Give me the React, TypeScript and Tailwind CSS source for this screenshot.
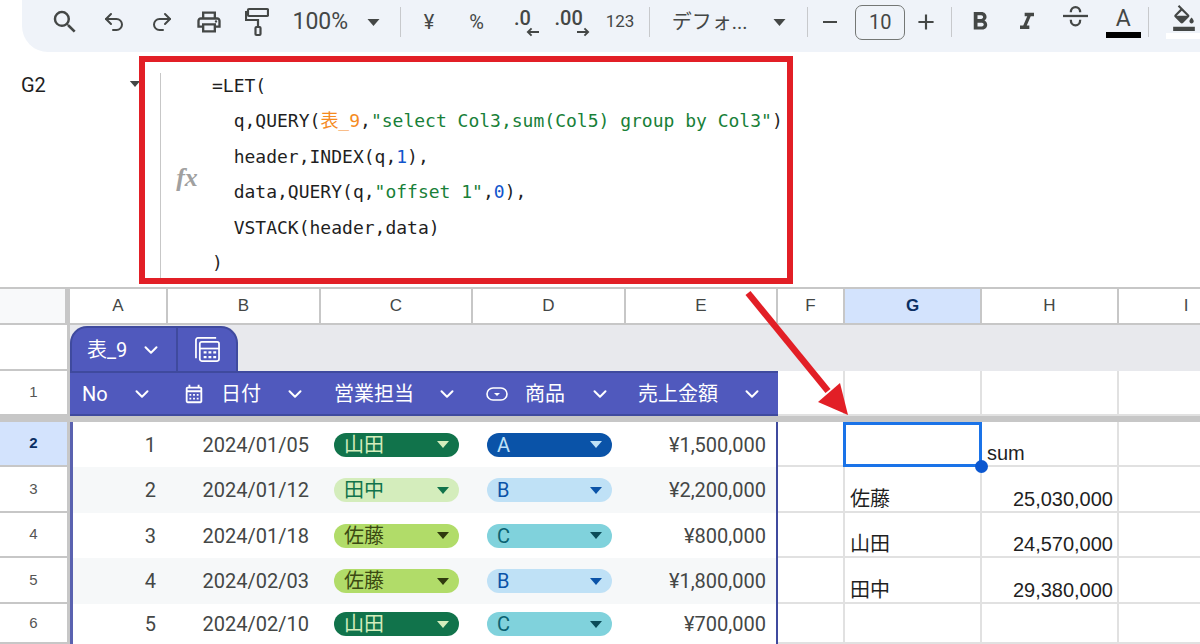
import React from 'react';
import { ChevronDown, Undo2, Redo2 } from 'lucide-react';
import {
  MdSearch,
  MdOutlinePrint,
  MdFormatBold,
  MdFormatItalic,
  MdFormatColorFill,
  MdAdd,
  MdRemove,
  MdOutlineCalendarMonth,
} from 'react-icons/md';

const sans = "font-['Roboto','Noto_Sans_CJK_JP',sans-serif]";
const arial = "font-['Liberation_Sans','Noto_Sans_CJK_JP',sans-serif]";
const mono = "font-['DejaVu_Sans_Mono','Noto_Sans_CJK_JP',monospace]";

const Caret = ({ className }: { className: string }) => (
  <svg viewBox="0 0 12 7" className={className} fill="currentColor">
    <path d="M0 0h12L6 7z" />
  </svg>
);

const Divider = () => <div className="w-px h-[30px] bg-[#c7c9cc]" />;

const Tool = ({ children }: { children: React.ReactNode }) => (
  <div className="w-[47.5px] h-[36px] flex items-center justify-center shrink-0">{children}</div>
);

const Toolbar = () => (
  <div className={`h-[52px] ml-[22px] pl-[19px] pb-[8px] flex items-center bg-[#eff3f9] rounded-bl-[26px] text-[#444746] ${sans}`}>
    <Tool><MdSearch size={30} /></Tool>
    <div className="w-[2px]" />
    <Tool><Undo2 size={24} strokeWidth={2} /></Tool>
    <Tool><Redo2 size={24} strokeWidth={2} /></Tool>
    <Tool><MdOutlinePrint size={28} /></Tool>
    <Tool>
      <svg viewBox="0 0 24 30" className="w-[24px] h-[30px]" fill="none" stroke="currentColor" strokeWidth="2.2">
        <rect x="3" y="2" width="20" height="7" rx="1" />
        <path d="M3 5H1v8h12v7" />
        <rect x="10.5" y="20" width="5" height="8" rx="1" />
      </svg>
    </Tool>
    <span className="ml-[12px] w-[56px] text-[23px]">100%</span>
    <Caret className="ml-[19px] w-[13px] h-[7px]" />
    <div className="ml-[20px]"><Divider /></div>
    <div className="ml-[4px] flex">
      <Tool><span className="text-[20px]">¥</span></Tool>
      <Tool><span className="text-[20px]">%</span></Tool>
      <Tool>
        <div className="relative w-[34px] h-[30px]">
          <span className="absolute left-[7px] top-[-4px] text-[20px] font-medium">.0</span>
          <svg viewBox="0 0 14 10" className="absolute left-[19px] top-[20px] w-[13px] h-[10px]" fill="none" stroke="currentColor" strokeWidth="2">
            <path d="M14 5H2M6 1 2 5l4 4" />
          </svg>
        </div>
      </Tool>
      <Tool>
        <div className="relative w-[40px] h-[30px]">
          <span className="absolute left-[3px] top-[-4px] text-[20px] font-medium">.00</span>
          <svg viewBox="0 0 14 10" className="absolute left-[25px] top-[20px] w-[13px] h-[10px]" fill="none" stroke="currentColor" strokeWidth="2">
            <path d="M0 5h12M8 1l4 4-4 4" />
          </svg>
        </div>
      </Tool>
      <Tool><span className="text-[17px] pl-[2px]">123</span></Tool>
    </div>
    <div className="ml-[6px]"><Divider /></div>
    <span className="ml-[22px] w-[80px] text-[20px] whitespace-nowrap">デフォ...</span>
    <Caret className="ml-[22px] w-[13px] h-[7px]" />
    <div className="ml-[21px]"><Divider /></div>
    <div className="ml-[8px] w-[28px] flex justify-center"><MdRemove size={24} /></div>
    <div className="ml-[11px] w-[50px] h-[35px] border border-[#747775] rounded-[7px] flex items-center justify-center text-[20px]">10</div>
    <div className="ml-[7px] w-[28px] flex justify-center"><MdAdd size={26} /></div>
    <div className="ml-[11px]"><Divider /></div>
    <div className="ml-[4px] flex">
      <Tool><MdFormatBold size={30} /></Tool>
      <Tool><MdFormatItalic size={28} /></Tool>
      <div className="w-[47.5px] pl-[1px] flex justify-center">
        <svg viewBox="0 0 24 24" className="w-[25px] h-[25px]" fill="none" stroke="currentColor" strokeWidth="2.2">
          <path d="M0 11.5h24" />
          <path d="M7.5 8c0-3 2-5 4.500-5s4.500 2 4.500 5M7.500 15c0 3.500 2 5.500 4.500 5.500s4.500-2 4.500-5.500" />
        </svg>
      </div>
      <Tool>
        <div className="pl-[2px] flex flex-col items-center">
          <span className="text-[23px] leading-[24px]">A</span>
          <div className="w-[35px] h-[6px] mt-[1px] bg-black" />
        </div>
      </Tool>
    </div>
    <div className="ml-[2px]"><Divider /></div>
    <div className="ml-[17px] flex flex-col items-start">
      <div className="pl-[5px] h-[26px]"><MdFormatColorFill size={26} /></div>
      <div className="w-[34px] h-[6px] mt-[2px] bg-white" />
    </div>
  </div>
);

const FormulaBar = () => (
  <div className="h-[235px] flex bg-white">
    <div className={`w-[160px] pl-[21px] pt-[18px] relative text-[20px] text-[#1f1f1f] ${sans}`}>
      G2
      <Caret className="absolute left-[129px] top-[29px] w-[12px] h-[6px] text-[#444746]" />
    </div>
    <div className="mt-[21px] mb-[8px] w-px bg-[#c7c7c7]" />
    <div className="w-[51px] flex items-center justify-center pt-[16px] pl-[1px]">
      <span className="font-['Liberation_Serif',serif] italic font-bold text-[26px] text-[#a0a0a0]">fx</span>
    </div>
    <div className={`pt-[16px] text-[18px] leading-[35.4px] text-[#1f1f1f] whitespace-pre ${mono}`}>
      <div>=LET(</div>
      <div>
        {'  q,QUERY('}
        <span className="text-[#f58b1f]">表_9</span>
        {','}
        <span className="text-[#188038]">"select Col3,sum(Col5) group by Col3"</span>
        {')'}
      </div>
      <div>
        {'  header,INDEX(q,'}
        <span className="text-[#1155cc]">1</span>
        {'),'}
      </div>
      <div>
        {'  data,QUERY(q,'}
        <span className="text-[#188038]">"offset 1"</span>
        {','}
        <span className="text-[#1155cc]">0</span>
        {'),'}
      </div>
      <div>{'  VSTACK(header,data)'}</div>
      <div>)</div>
    </div>
  </div>
);

const ColHead = ({ label, active }: { label: string; active?: boolean }) => (
  <div
    className={`flex items-center justify-center border-r-2 border-b-2 border-[#c7c7c7] text-[17px] ${arial} ${
      active ? 'bg-[#d3e3fd] text-[#0b2f63] font-bold' : 'bg-white text-[#444746]'
    }`}
  >
    {label}
  </div>
);

const RowNum = ({ n, active }: { n?: number; active?: boolean }) => (
  <div
    className={`flex items-center justify-center border-r-[3px] border-b-2 border-r-[#c7c7c7] border-b-[#c7c7c7] text-[15px] ${arial} ${
      active ? 'bg-[#d3e3fd] text-[#0b2f63] font-bold' : 'bg-white text-[#555]'
    }`}
  >
    {n}
  </div>
);

const HeadCell = ({ label, icon, pl, gap }: { label: string; icon?: React.ReactNode; pl: string; gap?: string }) => (
  <div className={`flex items-center justify-between pr-[15px] bg-[#5059bd] border-y-2 border-[#3f4a9e] text-white text-[20px] ${pl} ${sans}`}>
    <div className={`flex items-center ${gap ?? ''}`}>
      {icon}
      <span className="whitespace-nowrap">{label}</span>
    </div>
    <ChevronDown size={22} strokeWidth={2.2} />
  </div>
);

const chipStyles: Record<string, { box: string; arrow: string }> = {
  山田: { box: 'bg-[#11734b] text-[#d4edbc]', arrow: 'text-[#d4edbc]' },
  田中: { box: 'bg-[#d4edbc] text-[#11734b]', arrow: 'text-[#11734b]' },
  佐藤: { box: 'bg-[#b1dc69] text-[#3b4a12]', arrow: 'text-[#2f3a0e]' },
  A: { box: 'bg-[#0a53a8] text-[#bfe1f6]', arrow: 'text-[#bfe1f6]' },
  B: { box: 'bg-[#bfe1f6] text-[#0a53a8]', arrow: 'text-[#0a53a8]' },
  C: { box: 'bg-[#80d2dc] text-[#0b6271]', arrow: 'text-[#0b4c58]' },
};

const Chip = ({ value }: { value: string }) => (
  <div className={`w-[125px] h-[24px] rounded-full pl-[10px] pr-[10px] flex items-center justify-between text-[20px] ${sans} ${chipStyles[value].box}`}>
    <span>{value}</span>
    <Caret className={`w-[12px] h-[7px] ${chipStyles[value].arrow}`} />
  </div>
);

const rows = [
  { row: 2, no: 1, date: '2024/01/05', rep: '山田', item: 'A', amount: '¥1,500,000' },
  { row: 3, no: 2, date: '2024/01/12', rep: '田中', item: 'B', amount: '¥2,200,000' },
  { row: 4, no: 3, date: '2024/01/18', rep: '佐藤', item: 'C', amount: '¥800,000' },
  { row: 5, no: 4, date: '2024/02/03', rep: '佐藤', item: 'B', amount: '¥1,800,000' },
  { row: 6, no: 5, date: '2024/02/10', rep: '山田', item: 'C', amount: '¥700,000' },
];

const results: Record<number, { g?: string; h?: string }> = {
  3: { g: '佐藤', h: '25,030,000' },
  4: { g: '山田', h: '24,570,000' },
  5: { g: '田中', h: '29,380,000' },
};

const Plain = ({ children, className }: { children?: React.ReactNode; className?: string }) => (
  <div className={`relative border-r-2 border-b-2 border-[#e1e1e1] bg-white text-[20px] leading-[24px] text-[#1f1f1f] flex items-end ${arial} ${className ?? ''}`}>
    {children}
  </div>
);

const Sheet = () => (
  <div className="grid grid-cols-[70px_98px_153px_152px_153px_152px_67px_137px_137px_136px] grid-rows-[36px_46px_45px_6px_45px_46px_45px_46px_40px] border-t-2 border-[#c7c7c7]">
    <div className="bg-[#f8f9fa] border-r-[5px] border-b-2 border-[#c7c7c7]" />
    {['A', 'B', 'C', 'D', 'E', 'F', 'G', 'H', 'I'].map((c) => (
      <ColHead key={c} label={c} active={c === 'G'} />
    ))}

    <div className="bg-white border-r-[3px] border-b-2 border-r-[#c7c7c7] border-b-[#c7c7c7]" />
    <div className="col-span-9 bg-[#e8e9ed] flex items-end">
      <div className={`w-[168px] h-[45px] rounded-t-[17px] bg-[#5059bd] border-2 border-b-0 border-[#3f4a9e] flex text-white text-[20px] ${sans}`}>
        <div className="w-[106px] pl-[15px] pr-[14px] flex items-center justify-between border-r-2 border-[#3f4a9e]">
          <span>表_9</span>
          <ChevronDown size={22} strokeWidth={2.2} />
        </div>
        <div className="flex-1 flex items-center justify-center">
          <svg viewBox="0 0 26 26" className="w-[25px] h-[25px]" fill="none" stroke="currentColor" strokeWidth="1.8">
            <path d="M1 22V3a2 2 0 0 1 2-2h19" />
            <rect x="5" y="5" width="20" height="20" rx="2" />
            <path d="M5 12h20" />
            <path d="M9 16h3M14 16h3M19 16h3M9 21h3M14 21h3M19 21h3" strokeWidth="2.4" />
          </svg>
        </div>
      </div>
    </div>

    <RowNum n={1} />
    <HeadCell label="No" pl="pl-[12px]" />
    <HeadCell label="日付" pl="pl-[15px]" gap="gap-[16px]" icon={<MdOutlineCalendarMonth size={22} />} />
    <HeadCell label="営業担当" pl="pl-[13px]" />
    <HeadCell
      label="商品"
      pl="pl-[13px]"
      gap="gap-[17px]"
      icon={
        <svg viewBox="0 0 22 14" className="w-[22px] h-[14px]" fill="none" stroke="currentColor" strokeWidth="1.6">
          <rect x="1" y="1" width="20" height="12" rx="6" />
          <path d="M8 6h6l-3 3z" fill="currentColor" stroke="none" />
        </svg>
      }
    />
    <HeadCell label="売上金額" pl="pl-[12px]" />
    <Plain />
    <Plain />
    <Plain />
    <Plain />

    <div className="col-span-10 bg-[#c7c7c7]" />

    {rows.map((r) => {
      const striped = r.row % 2 === 1;
      const bg = striped ? 'bg-[#f6f8f9]' : 'bg-white';
      const text = `flex items-center justify-end text-[20px] text-[#444746] ${sans} ${bg}`;
      const result = results[r.row];
      return (
        <React.Fragment key={r.row}>
          <RowNum n={r.row} active={r.row === 2} />
          <div className={`${text} pr-[12px] border-l-[3px] border-[#5a62b0]`}>{r.no}</div>
          <div className={`${text} pr-[12px]`}>{r.date}</div>
          <div className={`flex items-center pl-[13px] ${bg}`}><Chip value={r.rep} /></div>
          <div className={`flex items-center pl-[14px] ${bg}`}><Chip value={r.item} /></div>
          <div className={`${text} pr-[10px] border-r-2 border-[#3f4a9e]`}>{r.amount}</div>
          <Plain />
          <Plain className="pl-[5px]">
            {r.row === 2 && (
              <div className="absolute z-10 left-[-2px] top-0 w-[139px] h-[45px] border-[3px] border-[#1a73e8]">
                <div className="absolute right-[-9px] bottom-[-9px] w-[13px] h-[13px] rounded-full bg-[#0b57d0]" />
              </div>
            )}
            {result?.g}
          </Plain>
          <Plain className={result?.h ? 'justify-end pr-[4px]' : 'pl-[5px]'}>{r.row === 2 ? 'sum' : result?.h}</Plain>
          <Plain />
        </React.Fragment>
      );
    })}
  </div>
);

export default function App() {
  return (
    <div className="relative w-[1200px] h-[644px] overflow-hidden bg-white">
      <Toolbar />
      <FormulaBar />
      <Sheet />

      {/* red annotation over the screenshot */}
      <div className="absolute left-[139px] top-[56px] w-[654px] h-[228px] border-[6px] border-[#e21f26]" />
      <svg className="absolute left-[740px] top-[285px] w-[120px] h-[140px]" viewBox="0 0 120 140">
        <path d="M8 8 88 106" stroke="#e21f26" strokeWidth="6.5" fill="none" />
        <path d="M108 130 78 117 100 98z" fill="#e21f26" />
      </svg>
    </div>
  );
}
